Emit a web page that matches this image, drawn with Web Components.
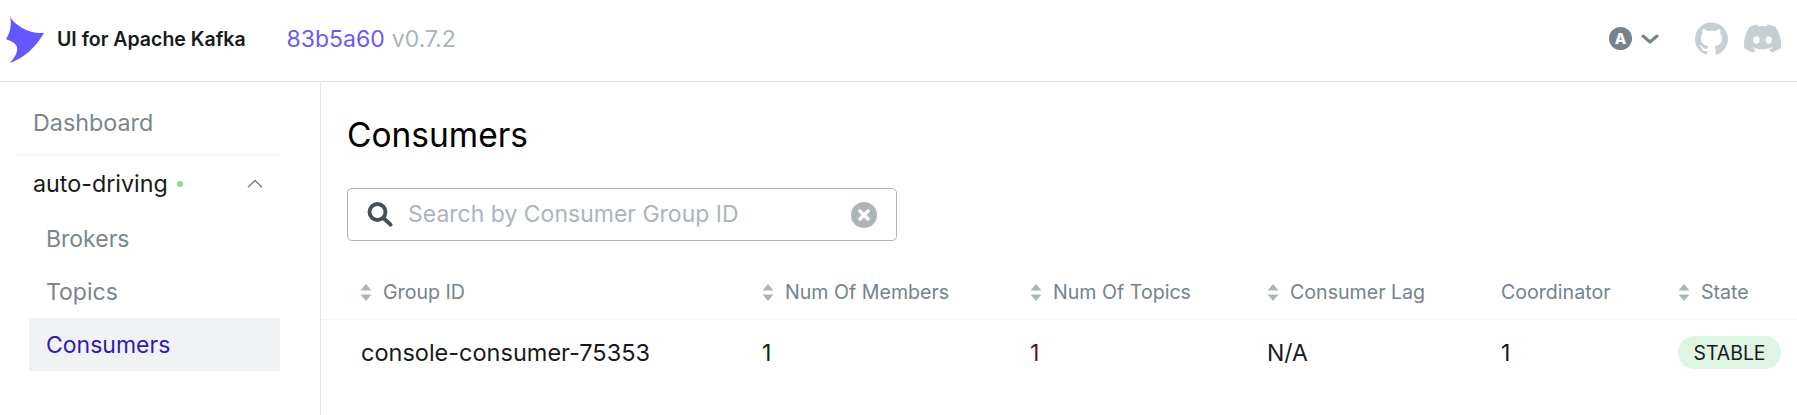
<!DOCTYPE html>
<html lang="en">
<head>
<meta charset="utf-8">
<title>UI for Apache Kafka</title>
<style>
  html, body { margin: 0; height: 100%; overflow: hidden; background: #fff; }
  body { font-family: Inter, "Liberation Sans", sans-serif; color: #171a1c; }
</style>
</head>
<body>
<kafka-app>
  <kafka-header slot="header" commit="83b5a60" version="v0.7.2"></kafka-header>
  <side-nav slot="nav"></side-nav>
  <consumers-page slot="main"></consumers-page>
</kafka-app>

<script>
class KafkaApp extends HTMLElement
{
    constructor()
    {
        super();
        this.attachShadow({mode: "open"});
        this.shadowRoot.innerHTML = `
        <style>
            :host{
                display: grid;
                grid-template-columns: 321px 1fr;
                grid-template-rows: 82px 1fr;
                height: 100vh;
            }
            ::slotted([slot=header]){
                grid-column: 1 / 3;
            }
        </style>
        <slot name="header"></slot>
        <slot name="nav"></slot>
        <slot name="main"></slot>
        `;
    }
}
customElements.define("kafka-app", KafkaApp);

class KafkaHeader extends HTMLElement
{
    constructor()
    {
        super();
        this.attachShadow({mode: "open"});
    }

    connectedCallback()
    {
        this.shadowRoot.innerHTML = `
        <style>
            :host{
                align-items: center;
                border-bottom: 1px solid #e3e6e8;
                box-sizing: border-box;
                display: flex;
                height: 82px;
                padding: 0 0 4px 6px;
            }
            .logo{
                display: block;
                height: 48px;
                margin-top: 3px;
                width: 40px;
            }
            .name{
                color: #171a1c;
                font-size: 19.5px;
                font-weight: 600;
                margin-left: 11px;
            }
            .commit{
                color: #6a5bf3;
                font-size: 23px;
                margin-left: 41px;
            }
            .version{
                color: #abb5ba;
                font-size: 23px;
                margin-left: 7px;
            }
            .right{
                align-items: center;
                display: flex;
                margin-left: auto;
            }
            .avatar{
                align-items: center;
                background: #73848c;
                border-radius: 50%;
                color: #fff;
                display: flex;
                font-size: 15px;
                font-weight: 800;
                height: 23px;
                justify-content: center;
                width: 23px;
            }
            .chev{
                display: block;
                height: 10px;
                margin-left: 9px;
                width: 18px;
            }
            .gh{
                display: block;
                height: 33px;
                margin-left: 36px;
                width: 33px;
            }
            .dc{
                display: block;
                height: 37px;
                margin-left: 16px;
                margin-right: 16px;
                width: 37px;
            }
        </style>
        <svg class="logo" viewBox="6 16 40 48" aria-hidden="true">
            <path fill="#6357ff" d="M10 16C13 24 28 34 44 33C36 47 24 58 10 63C14 58 18 53 17 47C15 42 10 41 6 39C10 33 12 25 10 16Z"/>
        </svg>
        <span class="name">UI for Apache Kafka</span>
        <span class="commit">${this.getAttribute("commit")}</span>
        <span class="version">${this.getAttribute("version")}</span>
        <div class="right">
            <span class="avatar">A</span>
            <svg class="chev" viewBox="0 0 18 10" aria-hidden="true">
                <path d="M2 2l7 6 7-6" fill="none" stroke="#73848c" stroke-width="3" stroke-linecap="round" stroke-linejoin="round"/>
            </svg>
            <svg class="gh" viewBox="0 0 24 24" aria-hidden="true">
                <path fill="#c7cfd2" d="M12 .297c-6.63 0-12 5.373-12 12 0 5.303 3.438 9.8 8.205 11.385.6.113.82-.258.82-.577 0-.285-.01-1.04-.015-2.04-3.338.724-4.042-1.61-4.042-1.61C4.422 18.07 3.633 17.7 3.633 17.7c-1.087-.744.084-.729.084-.729 1.205.084 1.838 1.236 1.838 1.236 1.07 1.835 2.809 1.305 3.495.998.108-.776.417-1.305.76-1.605-2.665-.3-5.466-1.332-5.466-5.93 0-1.31.465-2.38 1.235-3.22-.135-.303-.54-1.523.105-3.176 0 0 1.005-.322 3.3 1.23.96-.267 1.98-.399 3-.405 1.02.006 2.04.138 3 .405 2.28-1.552 3.285-1.23 3.285-1.23.645 1.653.24 2.873.12 3.176.765.84 1.23 1.91 1.23 3.22 0 4.61-2.805 5.625-5.475 5.92.42.36.81 1.096.81 2.22 0 1.606-.015 2.896-.015 3.286 0 .315.21.69.825.57C20.565 22.092 24 17.592 24 12.297c0-6.627-5.373-12-12-12"/>
            </svg>
            <svg class="dc" viewBox="0 0 24 24" aria-hidden="true">
                <path fill="#c7cfd2" d="M20.317 4.3698a19.7913 19.7913 0 00-4.8851-1.5152.0741.0741 0 00-.0785.0371c-.211.3753-.4447.8648-.6083 1.2495-1.8447-.2762-3.68-.2762-5.4868 0-.1636-.3933-.4058-.8742-.6177-1.2495a.077.077 0 00-.0785-.037 19.7363 19.7363 0 00-4.8852 1.515.0699.0699 0 00-.0321.0277C.5334 9.0458-.319 13.5799.0992 18.0578a.0824.0824 0 00.0312.0561c2.0528 1.5076 4.0413 2.4228 5.9929 3.0294a.0777.0777 0 00.0842-.0276c.4616-.6304.8731-1.2952 1.226-1.9942a.076.076 0 00-.0416-.1057c-.6528-.2476-1.2743-.5495-1.8722-.8923a.077.077 0 01-.0076-.1277c.1258-.0943.2517-.1923.3718-.2914a.0743.0743 0 01.0776-.0105c3.9278 1.7933 8.18 1.7933 12.0614 0a.0739.0739 0 01.0785.0095c.1202.099.246.1981.3728.2924a.077.077 0 01-.0066.1276 12.2986 12.2986 0 01-1.873.8914.0766.0766 0 00-.0407.1067c.3604.698.7719 1.3628 1.225 1.9932a.076.076 0 00.0842.0286c1.961-.6067 3.9495-1.5219 6.0023-3.0294a.077.077 0 00.0313-.0552c.5004-5.177-.8382-9.6739-3.5485-13.6604a.061.061 0 00-.0312-.0286zM8.02 15.3312c-1.1825 0-2.1569-1.0857-2.1569-2.419 0-1.3332.9555-2.4189 2.157-2.4189 1.2108 0 2.1757 1.0952 2.1568 2.419 0 1.3332-.9555 2.4189-2.1569 2.4189zm7.9748 0c-1.1825 0-2.1569-1.0857-2.1569-2.419 0-1.3332.9554-2.4189 2.1569-2.4189 1.2108 0 2.1757 1.0952 2.1568 2.419 0 1.3332-.946 2.4189-2.1568 2.4189Z"/>
            </svg>
        </div>
        `;
    }
}
customElements.define("kafka-header", KafkaHeader);

class NavLink extends HTMLElement
{
    constructor()
    {
        super();
        this.attachShadow({mode: "open"});
        this.shadowRoot.innerHTML = `
        <style>
            :host{
                align-items: center;
                box-sizing: border-box;
                color: #7b858b;
                display: flex;
                font-size: 23px;
                height: 53px;
                margin-left: 14px;
                padding-left: 17px;
            }
            :host([active]){
                background: #f1f2f3;
                color: #2f1cb0;
            }
        </style>
        <slot></slot>
        `;
    }
}
customElements.define("nav-link", NavLink);

class SideNav extends HTMLElement
{
    constructor()
    {
        super();
        this.attachShadow({mode: "open"});
        this.shadowRoot.innerHTML = `
        <style>
            :host{
                border-right: 1px solid #e3e6e8;
                box-sizing: border-box;
                display: block;
                padding: 14px 40px 0 15px;
            }
            .dash{
                align-items: center;
                border-bottom: 1px solid #f1f2f3;
                box-sizing: border-box;
                color: #7b858b;
                display: flex;
                font-size: 23.3px;
                height: 59px;
                padding: 0 0 6px 18px;
            }
            .cluster{
                align-items: center;
                color: #171a1c;
                display: flex;
                font-size: 23.3px;
                height: 57px;
                padding: 0 16px 0 18px;
            }
            .dot{
                background: #8ad99a;
                border-radius: 50%;
                height: 6px;
                margin-left: 9px;
                width: 6px;
            }
            .up{
                display: block;
                height: 9px;
                margin-left: auto;
                width: 18px;
            }
        </style>
        <div class="dash">Dashboard</div>
        <div class="cluster">
            auto-driving<span class="dot"></span>
            <svg class="up" viewBox="0 0 18 9" aria-hidden="true">
                <path d="M2 8.2L9 1.5 16 8.2" fill="none" stroke="#73848c" stroke-width="1.5"/>
            </svg>
        </div>
        <nav-link>Brokers</nav-link>
        <nav-link>Topics</nav-link>
        <nav-link active>Consumers</nav-link>
        `;
    }
}
customElements.define("side-nav", SideNav);

class SearchBox extends HTMLElement
{
    constructor()
    {
        super();
        this.attachShadow({mode: "open"});
        this.shadowRoot.innerHTML = `
        <style>
            :host{
                align-items: center;
                border: 1px solid #abb5ba;
                border-radius: 5px;
                box-sizing: border-box;
                display: flex;
                height: 53px;
                margin-left: 26px;
                padding: 0 19px 0 19px;
                width: 550px;
            }
            svg{
                display: block;
                flex: none;
            }
            .text{
                color: #abb5ba;
                flex: 1;
                font-size: 23px;
                margin-left: 15px;
                padding-bottom: 2px;
            }
        </style>
        <svg width="26" height="25" viewBox="0 0 26 25" aria-hidden="true">
            <circle cx="10.5" cy="10" r="8" fill="none" stroke="#454f54" stroke-width="3.8"/>
            <path d="M16.5 16l7 6.6" stroke="#454f54" stroke-width="4" stroke-linecap="round"/>
        </svg>
        <span class="text"><slot></slot></span>
        <svg width="26" height="26" viewBox="0 0 26 26" aria-hidden="true">
            <circle cx="13" cy="13" r="13" fill="#abb5ba"/>
            <path d="M9 9l8 8M17 9l-8 8" stroke="#fff" stroke-width="3.6" stroke-linecap="round"/>
        </svg>
        `;
    }
}
customElements.define("search-box", SearchBox);

class SortHead extends HTMLElement
{
    constructor()
    {
        super();
        this.attachShadow({mode: "open"});
        const sortable = !this.hasAttribute("plain");
        this.shadowRoot.innerHTML = `
        <style>
            :host{
                align-items: center;
                color: #73848c;
                display: flex;
                font-size: 19.6px;
                gap: 11px;
            }
            svg{
                display: block;
            }
        </style>
        ${sortable ? `<svg width="12" height="17" viewBox="0 0 12 17" aria-hidden="true">
            <path d="M6 0l5.5 6.5H.5z M6 17L.5 10.5h11z" fill="#abb5ba"/>
        </svg>` : ""}
        <span><slot></slot></span>
        `;
    }
}
customElements.define("sort-head", SortHead);

class StateTag extends HTMLElement
{
    constructor()
    {
        super();
        this.attachShadow({mode: "open"});
        this.shadowRoot.innerHTML = `
        <style>
            :host{
                align-items: center;
                background: #dff5e3;
                border-radius: 17px;
                color: #171a1c;
                display: inline-flex;
                font-size: 19.4px;
                height: 33px;
                justify-content: center;
                width: 103px;
            }
        </style>
        <slot></slot>
        `;
    }
}
customElements.define("state-tag", StateTag);

class ConsumersPage extends HTMLElement
{
    constructor()
    {
        super();
        this.attachShadow({mode: "open"});
        this.shadowRoot.innerHTML = `
        <style>
            :host{
                display: block;
                min-width: 0;
            }
            h1{
                color: #000;
                font-size: 33.5px;
                font-weight: 400;
                line-height: 40px;
                margin: 0;
                padding: 33px 0 33px 26px;
            }
            .row{
                align-items: center;
                display: grid;
                grid-template-columns: 402px 268px 237px 234px 177px 1fr;
                padding-left: 39px;
            }
            .head{
                border-bottom: 1px solid #f1f2f3;
                box-sizing: border-box;
                height: 79px;
                padding-top: 24px;
            }
            .body{
                color: #171a1c;
                font-size: 23px;
                height: 66px;
                padding-bottom: 1px;
                box-sizing: border-box;
            }
            .topics{
                color: #5c0f2d;
            }
            .id{
                font-size: 23.5px;
                margin-left: 1px;
            }
        </style>
        <h1>Consumers</h1>
        <search-box>Search by Consumer Group ID</search-box>
        <div class="row head">
            <sort-head>Group ID</sort-head>
            <sort-head>Num Of Members</sort-head>
            <sort-head>Num Of Topics</sort-head>
            <sort-head>Consumer Lag</sort-head>
            <sort-head plain>Coordinator</sort-head>
            <sort-head>State</sort-head>
        </div>
        <div class="row body">
            <span class="id">console-consumer-75353</span>
            <span>1</span>
            <span class="topics">1</span>
            <span>N/A</span>
            <span>1</span>
            <span><state-tag>STABLE</state-tag></span>
        </div>
        `;
    }
}
customElements.define("consumers-page", ConsumersPage);
</script>
</body>
</html>
